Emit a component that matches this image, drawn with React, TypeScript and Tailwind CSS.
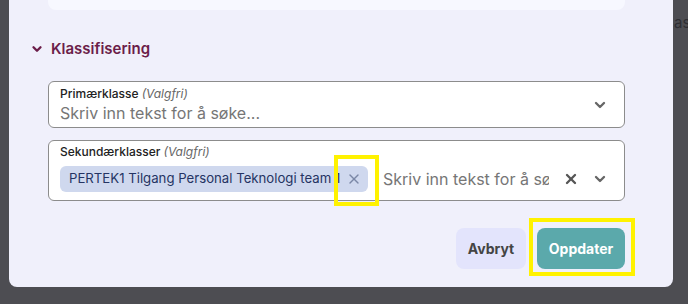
import { ChevronDown, X } from 'lucide-react';

export default function App() {
  return (
    <div className="relative w-[688px] h-[304px] overflow-hidden bg-[#4d4d52] font-['Inter',sans-serif]">
      {/* page text peeking out behind the modal */}
      <span className="absolute left-[674px] top-[12px] text-[15px] text-[#2e2e33]">as</span>

      {/* Modal */}
      <div className="ml-[9px] w-[664px] h-[287px] bg-[#f0f0fb] rounded-b-lg flex flex-col">
        {/* bottom of the section above */}
        <div className="ml-[39px] mr-[48px] h-[10px] bg-[#f7f8ff] rounded-b-lg"></div>

        {/* Section header */}
        <div className="flex items-center gap-[7px] ml-[21px] mt-[29px] text-[#6b1d49]">
          <ChevronDown className="w-[14px] h-[14px]" strokeWidth={4} />
          <span className="text-[15px] font-semibold leading-[20px]">Klassifisering</span>
        </div>

        {/* Primærklasse */}
        <div className="ml-[39px] mr-[48px] mt-[22px] h-[47px] bg-white border border-[#8c8c8c] rounded-md flex items-center pl-[11px] pr-[16px]">
          <div className="flex-1 flex flex-col">
            <span className="text-[12px] leading-[14px] text-[#222] font-medium">
              Primærklasse <span className="italic font-normal text-[#666]">(Valgfri)</span>
            </span>
            <span className="text-[16px] leading-[20px] mt-[2px] text-[#767676]">Skriv inn tekst for å søke...</span>
          </div>
          <ChevronDown className="w-[16px] h-[16px] text-[#666]" strokeWidth={3.5} />
        </div>

        {/* Sekundærklasser */}
        <div className="ml-[39px] mr-[48px] mt-[12px] h-[61px] bg-white border border-[#8c8c8c] rounded-md flex flex-col pl-[11px] pr-[16px] pt-[4px]">
          <span className="text-[12px] leading-[14px] text-[#222] font-medium">
            Sekundærklasser <span className="italic font-normal text-[#666]">(Valgfri)</span>
          </span>
          <div className="flex items-center mt-[7px]">
            <div className="h-[26px] w-[308px] bg-[#cfd8ee] rounded-md flex items-center pl-[9px] pr-[6px] overflow-hidden">
              <span className="flex-1 overflow-hidden whitespace-nowrap text-[13.2px] text-[#253463]">
                PERTEK1 Tilgang Personal Teknologi team 1
              </span>
              <X className="w-[16px] h-[16px] text-[#7b87a6] shrink-0 ml-[2px]" strokeWidth={2} />
            </div>
            <span className="ml-[15px] w-[166px] overflow-hidden whitespace-nowrap text-[16px] text-[#767676]">
              Skriv inn tekst for å søke...
            </span>
            <div className="flex-1"></div>
            <X className="w-[16px] h-[16px] text-[#555]" strokeWidth={3.5} />
            <ChevronDown className="w-[16px] h-[16px] text-[#666] ml-[13px]" strokeWidth={3.5} />
          </div>
        </div>

        {/* Buttons */}
        <div className="flex justify-end gap-[11px] mr-[48px] mt-[27px]">
          <button className="h-[41px] w-[70px] rounded-lg bg-[#e3e4fc] text-[14px] font-bold text-[#444]">Avbryt</button>
          <button className="h-[41px] w-[88px] rounded-lg bg-[#5ba9ab] text-[14px] font-bold text-white">Oppdater</button>
        </div>
      </div>

      {/* yellow annotation boxes */}
      <div className="absolute left-[334px] top-[155px] w-[45px] h-[51px] border-[4px] border-[#fff200]"></div>
      <div className="absolute left-[529px] top-[218px] w-[106px] h-[58px] border-[4px] border-[#fff200]"></div>
    </div>
  );
}
